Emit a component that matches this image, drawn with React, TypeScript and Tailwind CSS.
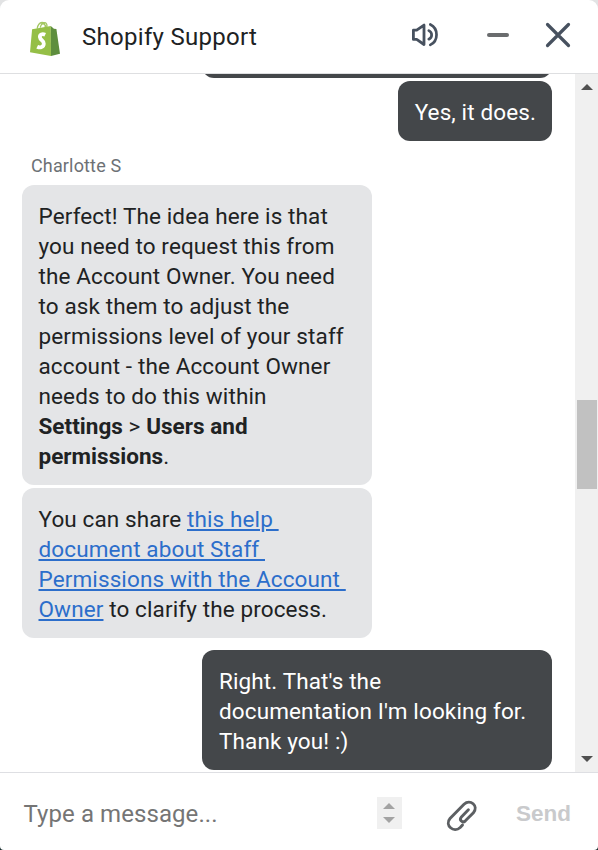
import React from "react";

function ShopifyLogo() {
  return (
    <svg width="32" height="36" viewBox="0 0 32 36" className="shrink-0" fill="none">
      <path d="M8.200 8.600C8.800 5 11 2.700 13 2.500c2-.1 3.200 1.600 3.300 5M11.200 7.700c.8-3 2.700-5 4.500-5 1.500 0 2.300 1.600 2.400 4M13 4.200c2-.8 3.600.4 4 3" stroke="#a3c763" strokeWidth="1.300" />
      <path d="M3.100 9.300 21.800 6.100 22 36 1 32.200Z" fill="#95bf47" />
      <path d="m21.800 6.100 3.100 2.700 2.500.3L31 33.800 22 36Z" fill="#5e8e3e" />
      <path d="M16.200 14.800c-3-1.400-5.500-.2-5.300 2.300.2 3.200 4.100 3.100 3.900 6.500-.2 3.500-3.600 4.600-6.600 3.100" stroke="#fff" strokeWidth="3.800" />
    </svg>
  );
}

function SpeakerIcon() {
  return (
    <svg width="28" height="26" viewBox="0 0 28 26" fill="none" stroke="#47515f" strokeWidth="2.800" strokeLinejoin="round" strokeLinecap="round">
      <path d="M2.400 8.200h3.300L13 3.100v19.400l-7.300-5.100H2.400Z" />
      <path d="M17.800 8.600c3.800 2 3.800 6.600 0 8.600M19.300 2.500c8.300 4 8.300 16.400 0 20.400" strokeWidth="2.700" />
    </svg>
  );
}

function Clip() {
  return (
    <svg width="32" height="32" viewBox="0 0 32 32" fill="none" stroke="#5c5f62" strokeWidth="2.900" strokeLinecap="round">
      <path d="m16.500 25-2.300 2.500c-6.400 6.100-15.900-2.500-10.200-9L18 4.200c6.200-5.800 15 1.800 9.400 8.500l-8 8.100c-3 2.700-6.600-.8-4-3.900l7-7.200" />
    </svg>
  );
}

function Arrow({ down = false, small = false }: { down?: boolean; small?: boolean }) {
  return (
    <svg width="12" height="6" viewBox="0 0 12 6" fill={small ? "#a3a3a3" : "#505050"}>
      <path d={down ? "M0 0h12L6 6Z" : "M0 6h12L6 0Z"} />
    </svg>
  );
}

function Bubble({ mine = false, children }: { mine?: boolean; children: React.ReactNode }) {
  return (
    <div className={mine
      ? "self-end shrink-0 rounded-[12px] bg-[#44474a] pl-[17px] pr-[16px] pt-[16px] pb-[14px] text-white whitespace-nowrap"
      : "w-[350px] shrink-0 rounded-[12px] bg-[#e4e5e7] px-[16.500px] pt-[16px] pb-[14px] text-[#202223] whitespace-nowrap"}>
      {children}
    </div>
  );
}

export default function App() {
  return (
    <div className="h-[850px] w-[598px] bg-[linear-gradient(#e2e3e4_50%,#172c2d_50%)] font-['Roboto',sans-serif]">
      <div className="flex h-full flex-col overflow-hidden rounded-t-[9px] rounded-b-[4px] bg-white">
        <header className="flex h-[74px] shrink-0 items-center border-b border-[#dedfe1] pl-[29px] pr-[27px]">
          <div className="pt-[2px]"><ShopifyLogo /></div>
          <h1 className="ml-[21px] text-[24px] leading-[30px] tracking-[0.29px] text-[#202223]">Shopify Support</h1>
          <div className="ml-auto flex items-center">
            <button className="mr-[48px] mt-[-3px]"><SpeakerIcon /></button>
            <button className="mr-[36px] mt-[-4px] h-[4px] w-[22px] rounded-full bg-[#6a6c6e]" />
            <button className="mt-[-4px]">
              <svg width="26" height="26" viewBox="0 0 26 26" stroke="#47515f" strokeWidth="3.200" strokeLinecap="round"><path d="m2.500 2.500 21 21m0-21-21 21" /></svg>
            </button>
          </div>
        </header>
        <main className="flex h-[698px] shrink-0 overflow-hidden">
          <div className="flex w-[575px] flex-col overflow-hidden pl-[22px] pr-[23px] text-[22.5px] leading-[30px] tracking-[0.12px]">
            <div className="-mt-[26px] mb-[3px] h-[30px] w-[350px] shrink-0 self-end rounded-[12px] bg-[#44474a]" />
            <Bubble mine>Yes, it does.</Bubble>
            <div className="flex h-[44px] shrink-0 items-center pl-[9px] pt-[6px] text-[18px] leading-[24px] tracking-[0.15px] text-[#6d7175]">Charlotte S</div>
            <Bubble>
              Perfect! The idea here is that<br />you need to request this from<br />the Account Owner. You need<br />to ask them to adjust the<br />permissions level of your staff<br />account - the Account Owner<br />needs to do this within<br /><b className="font-bold tracking-[0.02px]">Settings</b> &gt; <b className="font-bold tracking-[0.02px]">Users and<br />permissions</b>.
            </Bubble>
            <div className="h-[3px] shrink-0" />
            <Bubble>
              You can share <a className="text-[#2c6ecb] underline decoration-2 underline-offset-[2px]">this help&nbsp;<br />document about Staff&nbsp;<br />Permissions with the Account&nbsp;<br />Owner</a> to clarify the process.
            </Bubble>
            <div className="h-[12px] shrink-0" />
            <div className="flex w-[350px] flex-col self-end [&>div]:w-full">
              <Bubble mine>Right. That's the<br />documentation I'm looking for.<br />Thank you! :)</Bubble>
            </div>
          </div>
          <div className="flex w-[23px] flex-col items-center bg-[#f0f0f0] pl-[1px] pt-[10px] pb-[10px]">
            <Arrow />
            <div className="mt-[310px] h-[89px] w-[20px] bg-[#c1c1c1]" />
            <div className="mt-auto"><Arrow down /></div>
          </div>
        </main>
        <footer className="flex h-[78px] shrink-0 items-center border-t border-[#dedfe3] pl-[23.500px] pr-[27px]">
          <span className="pt-[4px] text-[24px] leading-[30px] tracking-[0.08px] text-[#757575]">Type a message...</span>
          <div className="ml-auto mr-[44px] mt-[3px] flex h-[32px] w-[25px] flex-col items-center justify-between bg-[#f0f0f0] py-[6px]">
            <Arrow small /><Arrow small down />
          </div>
          <div className="mr-[38px] mt-[8px]"><Clip /></div>
          <button className="pt-[4px] font-['Liberation_Sans',sans-serif] text-[22.5px] font-bold leading-[30px] text-[#c9cacc]">Send</button>
        </footer>
      </div>
    </div>
  );
}
